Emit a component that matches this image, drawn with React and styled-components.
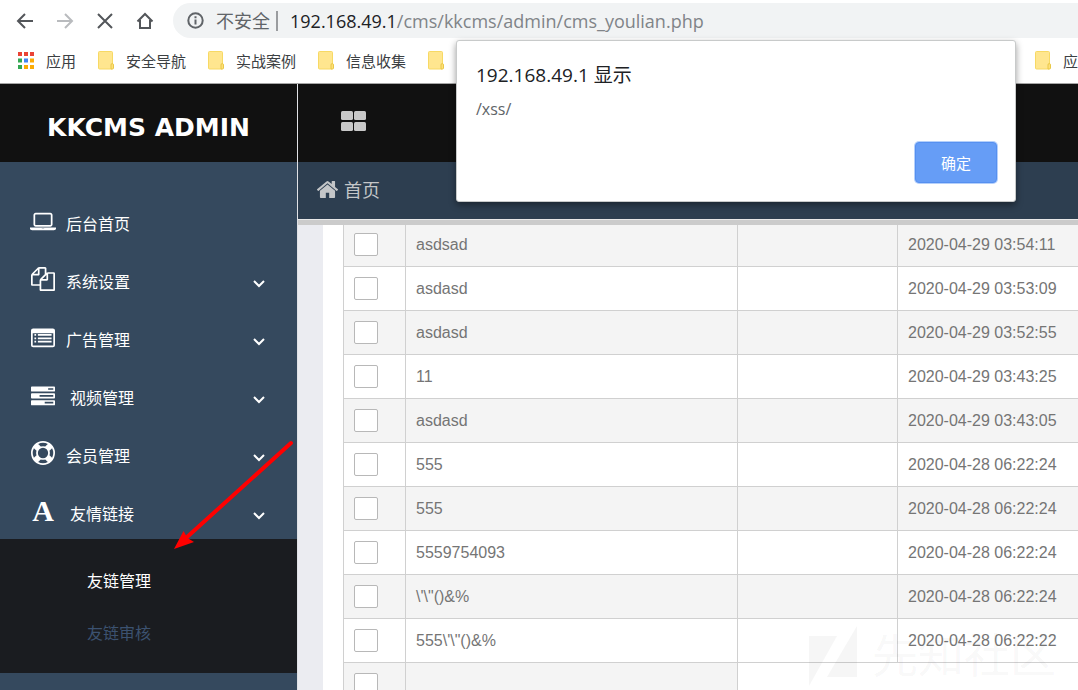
import React from "react";
import styled, { createGlobalStyle } from "styled-components";

const ui = `"Open Sans", "Noto Sans CJK SC", sans-serif`;
const cjk = `"Liberation Sans", "Noto Sans CJK SC", sans-serif`;

const Global = createGlobalStyle`
  * { box-sizing: border-box; }
  body { margin: 0; background: #fff; font-family: ${cjk}; overflow: hidden; }
  button, input { font: inherit; }
  a { color: inherit; text-decoration: none; }
  svg { display: block; flex: none; }
`;

const Screen = styled.div`
  position: relative;
  display: flex;
  flex-direction: column;
  height: 100vh;
  overflow: hidden;
`;

/* Browser chrome */
const Chrome = styled.header`
  flex: none;
  background: #fff;
  border-bottom: 1px solid #a6a6a6;
`;
const Toolbar = styled.div`
  display: flex;
  align-items: center;
  padding: 3px 0 0 5px;
`;
const NavButton = styled.button`
  display: flex;
  align-items: center;
  justify-content: center;
  width: 40px;
  height: 35px;
  padding: 0;
  border: 0;
  background: none;
  color: ${(p) => (p.$dim ? "#b9bbbe" : "#53565a")};
`;
const AddressBar = styled.div`
  display: flex;
  align-items: center;
  flex: 1;
  height: 35px;
  margin-left: 8px;
  padding-left: 14px;
  border-radius: 18px 0 0 18px;
  background: #f1f3f4;
  color: #606468;
`;
const Insecure = styled.span`
  flex: none;
  margin-left: 12px;
  padding-right: 6px;
  border-right: 2px solid #9a9c9f;
  font: 18px/20px ${ui};
  white-space: nowrap;
`;
const UrlInput = styled.input`
  flex: 1;
  min-width: 0;
  padding: 0;
  border: 0;
  background: none;
  font: 18px/28px ${ui};
  outline: 0;
`;
const UrlText = styled.label`
  flex: none;
  margin-left: 12px;
  color: #808488;
  font: 18px/28px ${ui};
  white-space: nowrap;
`;
const Host = styled.span`
  color: #202124;
`;
const Bookmarks = styled.nav`
  display: flex;
  align-items: center;
  gap: 22px;
  height: 45px;
  padding-left: 18px;
`;
const Bookmark = styled.a`
  display: flex;
  align-items: center;
  gap: 12px;
  font: 15px/20px ${ui};
  color: #3c4043;
  white-space: nowrap;
  margin-left: ${(p) => (p.$end ? "auto" : "0")};
`;

/* Admin shell */
const Shell = styled.div`
  display: flex;
  flex: 1;
  min-height: 0;
`;
const Sidebar = styled.aside`
  flex: none;
  width: 298px;
  border-right: 1px solid #e0e2e6;
  background: #35495e;
  color: #fff;
  overflow: hidden;
`;
const Brand = styled.h1`
  display: flex;
  align-items: center;
  justify-content: center;
  height: 78px;
  margin: 0;
  padding-top: 9px;
  background: #111;
  font: bold 25px/32px "DejaVu Sans", sans-serif;
  white-space: nowrap;
`;
const Menu = styled.ul`
  display: flex;
  flex-direction: column;
  gap: 8px;
  margin: 0;
  padding: 36px 0 1px;
  list-style: none;
`;
const MenuLink = styled.a`
  display: flex;
  align-items: center;
  height: 50px;
  padding: 0 31px;
  font-size: 16px;
`;
const MenuIcon = styled.span`
  display: flex;
  justify-content: center;
  width: 24px;
  padding-bottom: 4px;
  font: bold 30px/30px "Liberation Serif", serif;
`;
const MenuLabel = styled.span`
  flex: 1;
  margin-left: ${(p) => (p.$wide ? "15px" : "11px")};
`;
const Chevron = styled.svg`
  margin-top: 3px;
`;
const SubMenu = styled.ul`
  margin: 0;
  padding: 15px 0;
  list-style: none;
  background: #1a1c20;
`;
const SubLink = styled.a`
  display: flex;
  align-items: center;
  height: 52px;
  padding-left: 87px;
  font-size: 16px;
  color: ${(p) => (p.$active ? "#fff" : "#3c5270")};
`;
const Main = styled.main`
  display: flex;
  flex-direction: column;
  flex: 1;
  min-width: 0;
`;
const TopBar = styled.div`
  display: flex;
  align-items: center;
  flex: none;
  height: 78px;
  padding: 0 0 4px 43px;
  background: #111;
`;
const GridButton = styled.button`
  padding: 0;
  border: 0;
  background: none;
`;
const Crumbs = styled.nav`
  flex: none;
  height: 63px;
  padding: 15px 0 0 19px;
  background: #2d3e50;
  border-bottom: 5px solid #cbcbcb;
  box-shadow: inset 0 -1px #e8e8e8;
`;
const Crumb = styled.a`
  display: flex;
  align-items: center;
  gap: 6px;
  font-size: 18px;
  line-height: 28px;
  color: #c4c6c8;
`;
const CrumbIcon = styled.span`
  padding-bottom: 3px;
`;
const Content = styled.section`
  flex: 1;
  min-height: 0;
  overflow: hidden;
  padding-left: 25px;
  background: #ebecf1;
`;
const Panel = styled.div`
  min-height: 100%;
  padding-left: 20px;
  background: #fff;
`;
const Table = styled.table`
  width: 100%;
  margin-top: -3px;
  border-collapse: collapse;
  table-layout: fixed;
  color: #757575;
  font-size: 16px;
  line-height: 20px;
`;
const Col = styled.col`
  width: ${(p) => p.$w};
`;
const Row = styled.tr`
  height: 44px;
  background: ${(p) => (p.$shade ? "#f4f4f4" : "#fff")};
`;
const Cell = styled.td`
  padding: 0 10px;
  border: 1px solid #d0d0d0;
  border-right-width: ${(p) => (p.$last ? "0" : "1px")};
  white-space: nowrap;
`;
const EmptyCell = styled.td`
  padding: 0;
  border-top: 1px solid #d0d0d0;
  background: #fff;
`;
const Check = styled.input`
  appearance: none;
  display: block;
  width: 24px;
  height: 23px;
  margin: 0;
  border: 1px solid #b8b8b8;
  border-radius: 2px;
  background: #fff;
`;

/* Layers over the page */
const Dialog = styled.div`
  position: absolute;
  top: 40px;
  right: 62px;
  display: flex;
  flex-direction: column;
  width: 560px;
  padding: 20px 18px 18px 19px;
  border: 1px solid #c8caca;
  border-radius: 3px;
  background: #fff;
  box-shadow: 0 3px 7px rgba(0, 0, 0, 0.4);
`;
const DialogTitle = styled.h2`
  margin: 0;
  font: 19px/28px ${ui};
  color: #202124;
`;
const DialogText = styled.p`
  margin: 8px 0 21px;
  font: 16px/24px ${ui};
  color: #606468;
`;
const OkButton = styled.button`
  align-self: flex-end;
  width: 82px;
  height: 41px;
  border: 1px solid #5690f0;
  border-radius: 4px;
  background: #669df6;
  box-shadow: 0 0 0 1px #b5d0fb;
  color: #fff;
  font: 15px/20px ${ui};
`;
const Arrow = styled.svg`
  position: absolute;
  left: 170px;
  top: 438px;
`;
const Watermark = styled.div`
  position: absolute;
  right: 22px;
  bottom: 4px;
  display: flex;
  align-items: center;
  gap: 15px;
  color: rgba(70, 70, 80, 0.05);
  font: 46px/60px ${cjk};
  pointer-events: none;
`;

const fa = {
  laptop:
    "M416 1280q-66 0-113-47t-47-113v-704q0-66 47-113t113-47h1088q66 0 113 47t47 113v704q0 66-47 113t-113 47h-1088zm-32-864v704q0 13 9.5 22.5t22.5 9.5h1088q13 0 22.5-9.5t9.5-22.5v-704q0-13-9.5-22.5t-22.5-9.5h-1088q-13 0-22.5 9.5t-9.5 22.5zm1376 928h160v96q0 40-47 68t-113 28h-1600q-66 0-113-28t-47-68v-96h1760zm-720 96q16 0 16-16t-16-16h-160q-16 0-16 16t16 16h160z",
  copy: "M1696 384q40 0 68 28t28 68v1216q0 40-28 68t-68 28h-960q-40 0-68-28t-28-68v-288h-544q-40 0-68-28t-28-68v-672q0-40 20-88t48-76l408-408q28-28 76-48t88-20h416q40 0 68 28t28 68v328q68-40 128-40h416zm-544 213l-299 299h299v-299zm-640-384l-299 299h299v-299zm196 647l316-316v-416h-384v416q0 40-28 68t-68 28h-416v640h512v-256q0-40 20-88t48-76zm956 804v-1152h-384v416q0 40-28 68t-68 28h-416v640h896z",
  list: "M160 256h1472q160 0 160 160v1088q0 160-160 160h-1472q-160 0-160-160v-1088q0-160 160-160zM128 608v928h1536v-928zM256 672h128v128h-128zM256 928h128v128h-128zM256 1184h128v128h-128zM512 672h1024v128h-1024zM512 928h1024v128h-1024zM512 1184h1024v128h-1024z",
  tasks:
    "M1024 1536h640v-128h-640zM640 1024h1024v-128h-1024zM1280 512h384v-128h-384zM64 256h1664q64 0 64 64v256q0 64-64 64h-1664q-64 0-64-64v-256q0-64 64-64zM64 768h1664q64 0 64 64v256q0 64-64 64h-1664q-64 0-64-64v-256q0-64 64-64zM64 1280h1664q64 0 64 64v256q0 64-64 64h-1664q-64 0-64-64v-256q0-64 64-64z",
  ring: "M896 0q182 0 348 71t286 191 191 286 71 348-71 348-191 286-286 191-348 71-348-71-286-191-191-286-71-348 71-348 191-286 286-191 348-71zm0 128q-190 0-361 90l194 194q82-28 167-28t167 28l194-194q-171-90-361-90zm-678 1129l194-194q-28-82-28-167t28-167l-194-194q-90 171-90 361t90 361zm678 407q190 0 361-90l-194-194q-82 28-167 28t-167-28l-194 194q171 90 361 90zm0-384q159 0 271.5-112.5t112.5-271.5-112.5-271.5-271.5-112.5-271.5 112.5-112.5 271.5 112.5 271.5 271.5 112.5zm484-217l194 194q90-171 90-361t-90-361l-194 194q28 82 28 167t-28 167z",
  home: "M1472 992v480q0 26-19 45t-45 19h-384v-384h-256v384h-384q-26 0-45-19t-19-45v-480q0-1 .5-3t.5-3l575-474 575 474q1 2 1 6zm223-69l-62 74q-8 9-21 11h-3q-13 0-21-7l-692-577-692 577q-12 8-24 7-13-2-21-11l-62-74q-8-10-7-23.5t11-21.5l719-599q32-26 76-26t76 26l244 204v-195q0-14 9-23t23-9h192q14 0 23 9t9 23v408l219 182q10 8 11 21.5t-7 23.5z",
};

const Glyph = ({ name, box = "0 0 1792 1792", w = 24, h = 24 }) => (
  <svg width={w} height={h} viewBox={box} fill="currentColor" fillRule="evenodd" aria-hidden="true">
    <path d={fa[name]} />
  </svg>
);

const Line = ({ d }) => (
  <svg width="20" height="20" viewBox="0 0 20 20" fill="none" stroke="currentColor" strokeWidth="2" aria-hidden="true">
    <path d={d} />
  </svg>
);

const Folder = () => (
  <svg width="16" height="19" viewBox="0 0 16 19" aria-hidden="true">
    <rect x=".5" y=".5" width="14" height="17.5" rx="1" fill="#ffe68f" stroke="#f7d964" />
    <path d="M13 18v-4q0-1.500 1.200-1.500t1.300 1.500v3q0 1-1 1z" fill="#ffe07a" stroke="#e9c847" />
  </svg>
);

const appColors = ["#ea4335", "#ea4335", "#ea4335", "#34a853", "#4285f4", "#fbab05", "#34a853", "#fbab05", "#fbab05"];
const Apps = () => (
  <svg width="16" height="17" viewBox="0 0 16 17" aria-hidden="true">
    {appColors.map((c, i) => (
      <rect key={i} x={(i % 3) * 6} y={Math.floor(i / 3) * 6.5} width="4" height="4" fill={c} />
    ))}
  </svg>
);

const menu = [
  { label: "后台首页", icon: <Glyph name="laptop" box="0 128 1920 1536" w={26} h={21} />, leaf: true },
  { label: "系统设置", icon: <Glyph name="copy" /> },
  { label: "广告管理", icon: <Glyph name="list" /> },
  { label: "视频管理", icon: <Glyph name="tasks" />, wide: true },
  { label: "会员管理", icon: <Glyph name="ring" /> },
  { label: "友情链接", icon: "A", wide: true },
];

const rows = [
  ["asdsad", "2020-04-29 03:54:11"],
  ["asdasd", "2020-04-29 03:53:09"],
  ["asdasd", "2020-04-29 03:52:55"],
  ["11", "2020-04-29 03:43:25"],
  ["asdasd", "2020-04-29 03:43:05"],
  ["555", "2020-04-28 06:22:24"],
  ["555", "2020-04-28 06:22:24"],
  ["5559754093", "2020-04-28 06:22:24"],
  [`\\'\\"()&%`, "2020-04-28 06:22:24"],
  [`555\\'\\"()&%`, "2020-04-28 06:22:22"],
];

export default function App() {
  return (
    <Screen>
      <Global />
      <Chrome>
        <Toolbar>
          <NavButton aria-label="后退"><Line d="M18 10H3M10 3l-7 7 7 7" /></NavButton>
          <NavButton aria-label="前进" $dim><Line d="M2 10h15M10 3l7 7-7 7" /></NavButton>
          <NavButton aria-label="停止"><Line d="M3 3l14 14M17 3L3 17" /></NavButton>
          <NavButton aria-label="主页"><Line d="M2.500 10.500L10 3l7.500 7.500M5 9v8h10V9" /></NavButton>
          <AddressBar>
            <svg width="17" height="17" viewBox="0 0 17 17" fill="none" stroke="currentColor" strokeWidth="2" aria-hidden="true">
              <circle cx="8.500" cy="8.500" r="7.200" />
              <path d="M8.500 7.500v5M8.500 4.200v2" />
            </svg>
            <Insecure>不安全</Insecure>
            <UrlText htmlFor="url"><Host>192.168.49.1</Host>/cms/kkcms/admin/cms_youlian.php</UrlText>
            <UrlInput id="url" type="text" />
          </AddressBar>
        </Toolbar>
        <Bookmarks>
          <Bookmark href="#"><Apps />应用</Bookmark>
          <Bookmark href="#"><Folder />安全导航</Bookmark>
          <Bookmark href="#"><Folder />实战案例</Bookmark>
          <Bookmark href="#"><Folder />信息收集</Bookmark>
          <Bookmark href="#" aria-label="书签"><Folder /></Bookmark>
          <Bookmark href="#" $end><Folder />应</Bookmark>
        </Bookmarks>
      </Chrome>

      <Shell>
        <Sidebar>
          <Brand>KKCMS ADMIN</Brand>
          <Menu>
            {menu.map((m) => (
              <li key={m.label}>
                <MenuLink href="#">
                  <MenuIcon aria-hidden="true">{m.icon}</MenuIcon>
                  <MenuLabel $wide={m.wide}>{m.label}</MenuLabel>
                  {!m.leaf && (
                    <Chevron width="14" height="10" viewBox="0 0 14 10" fill="none" stroke="#fff" strokeWidth="2" aria-hidden="true">
                      <path d="M2 3l5 5 5-5" />
                    </Chevron>
                  )}
                </MenuLink>
              </li>
            ))}
          </Menu>
          <SubMenu>
            <li><SubLink href="#" $active>友链管理</SubLink></li>
            <li><SubLink href="#">友链审核</SubLink></li>
          </SubMenu>
        </Sidebar>

        <Main>
          <TopBar>
            <GridButton aria-label="菜单">
              <svg width="25" height="20" viewBox="0 0 25 20" fill="#c8c8c8" aria-hidden="true">
                <rect width="12" height="9" rx="1.500" />
                <rect x="13" width="12" height="9" rx="1.500" />
                <rect y="11" width="12" height="9" rx="1.500" />
                <rect x="13" y="11" width="12" height="9" rx="1.500" />
              </svg>
            </GridButton>
          </TopBar>
          <Crumbs>
            <Crumb href="#">
              <CrumbIcon><Glyph name="home" box="96 192 1600 1408" w={21} h={19} /></CrumbIcon>
              首页
            </Crumb>
          </Crumbs>
          <Content>
            <Panel>
              <Table>
                <colgroup>
                  <Col $w="62px" />
                  <Col $w="332px" />
                  <Col $w="160px" />
                  <Col $w="auto" />
                </colgroup>
                <tbody>
                  {rows.map(([name, time], i) => (
                    <Row key={i} $shade={i % 2 === 0}>
                      <Cell><Check type="checkbox" aria-label={name} /></Cell>
                      <Cell>{name}</Cell>
                      <Cell />
                      <Cell $last>{time}</Cell>
                    </Row>
                  ))}
                  <Row $shade>
                    <Cell><Check type="checkbox" aria-label="全选" /></Cell>
                    <Cell />
                    <EmptyCell colSpan={2} />
                  </Row>
                </tbody>
              </Table>
            </Panel>
          </Content>
        </Main>
      </Shell>

      <Watermark>
        <svg width="48" height="60" viewBox="0 0 48 60" fill="currentColor" aria-hidden="true">
          <path d="M0 10h28L0 60zM48 0v51H18z" />
        </svg>
        先知社区
      </Watermark>

      <Arrow width="126" height="114" viewBox="0 0 126 114" aria-hidden="true">
        <path d="M121 5L16 100" stroke="#f00" strokeWidth="4" strokeLinecap="round" />
        <path d="M4 111L13.500 93l4 7 6.500 4z" fill="#f00" />
      </Arrow>

      <Dialog role="dialog" aria-labelledby="dialog-title">
        <DialogTitle id="dialog-title">192.168.49.1 显示</DialogTitle>
        <DialogText>/xss/</DialogText>
        <OkButton>确定</OkButton>
      </Dialog>
    </Screen>
  );
}
